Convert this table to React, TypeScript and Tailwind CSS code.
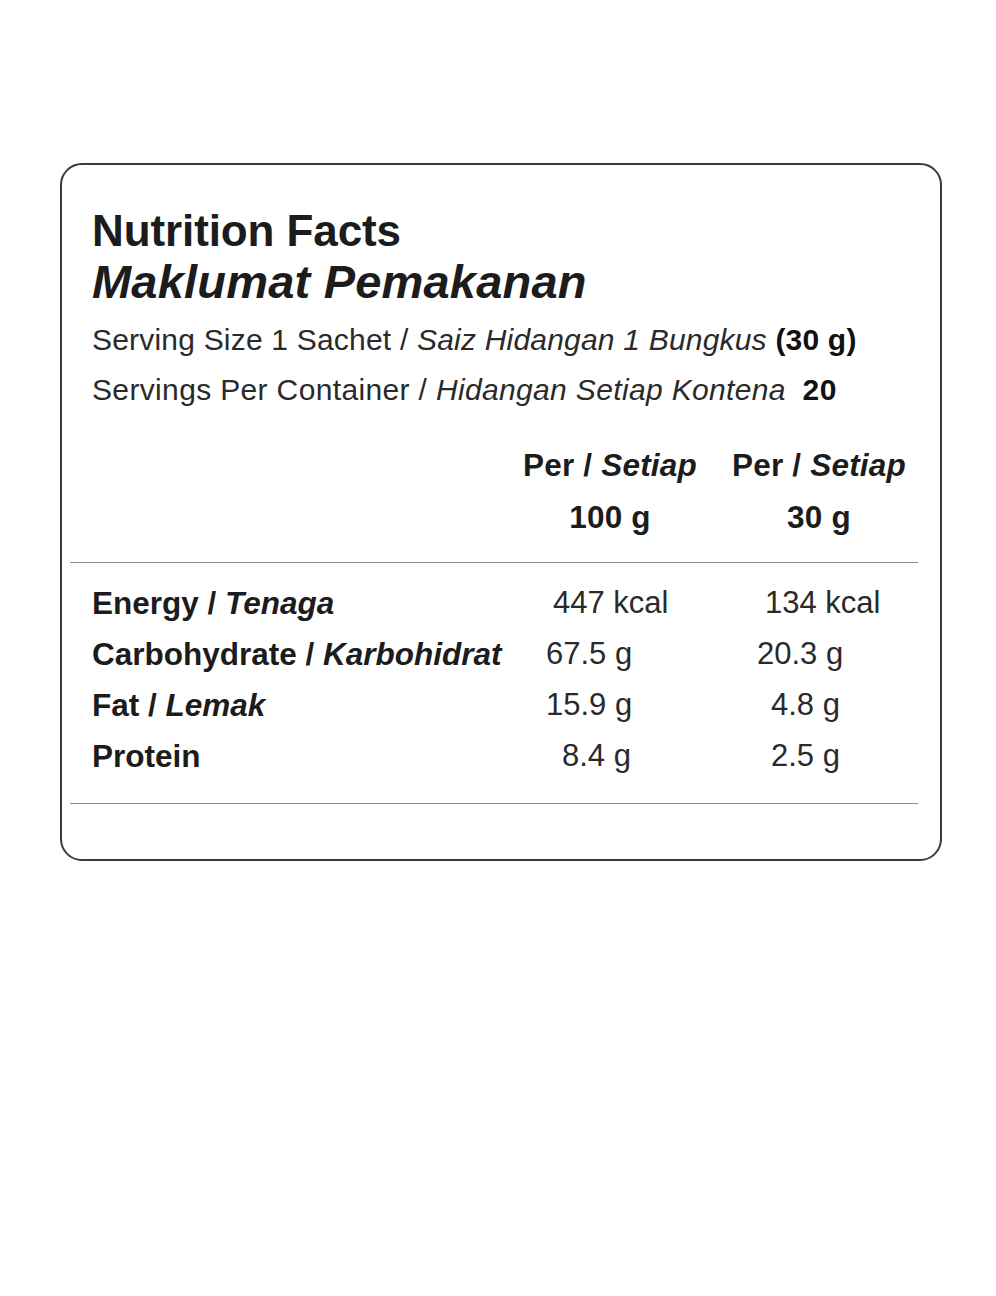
const font = { fontFamily: '"Liberation Sans", Arial, sans-serif' };

type Row = {
  en: string;
  my?: string;
  a: string;
  aPad: string;
  b: string;
  bPad: string;
};

const rows: Row[] = [
  { en: 'Energy', my: 'Tenaga', a: '447 kcal', aPad: 'pl-[33px]', b: '134 kcal', bPad: 'pl-[35px]' },
  { en: 'Carbohydrate', my: 'Karbohidrat', a: '67.5 g', aPad: 'pl-[26px]', b: '20.3 g', bPad: 'pl-[27px]' },
  { en: 'Fat', my: 'Lemak', a: '15.9 g', aPad: 'pl-[26px]', b: '4.8 g', bPad: 'pl-[41px]' },
  { en: 'Protein', a: '8.4 g', aPad: 'pl-[42px]', b: '2.5 g', bPad: 'pl-[41px]' },
];

const ColHead = ({ amount, pad }: { amount: string; pad: string }) => (
  <div className={`${pad} flex`}>
    <div className="flex flex-col items-center font-bold text-[31.5px] leading-[52px] tracking-[0.2px]">
      <span>
        Per / <span className="italic">Setiap</span>
      </span>
      <span>{amount}</span>
    </div>
  </div>
);

export default function App() {
  return (
    <div className="min-h-[1296px] bg-white text-[#1c1c1c]" style={font}>
      <div className="pt-[163px] px-[60px] w-[1002px]">
        <div className="border-2 border-[#3a3a3a] rounded-[22px] pl-[30px] pr-[22px] pt-[40px] pb-[55px] w-[882px]">
          <h1 className="font-bold text-[44px] leading-[51px] tracking-[-0.1px]">Nutrition Facts</h1>
          <h2 className="font-bold italic text-[47px] leading-[51px] tracking-[0.2px]">Maklumat Pemakanan</h2>

          <p className="text-[30px] leading-[50px] mt-[8px] text-[#2a2a2a] tracking-[0.2px] whitespace-nowrap">
            Serving Size 1 Sachet / <span className="italic">Saiz Hidangan 1 Bungkus</span>{' '}
            <span className="font-bold text-[#111]">(30 g)</span>
          </p>
          <p className="text-[30px] leading-[50px] text-[#2a2a2a] tracking-[0.35px] whitespace-nowrap">
            Servings Per Container / <span className="italic">Hidangan Setiap Kontena</span>{' '}
            <span className="font-bold text-[#111] ml-[8px]">20</span>
          </p>

          <div className="grid grid-cols-[428px_210px_188px] mt-[24px]">
            <div />
            <ColHead amount="100 g" pad="pl-[3px]" />
            <ColHead amount="30 g" pad="pl-[2px]" />
          </div>

          <div className="-ml-[22px] mt-[19px] h-px bg-[#8c8c8c]" />

          <div className="mt-[15px]">
            {rows.map((r) => (
              <div key={r.en} className="grid grid-cols-[428px_210px_188px] h-[51px] items-center">
                <div className="font-bold text-[31.5px] whitespace-nowrap">
                  {r.en}
                  {r.my && (
                    <>
                      {' / '}
                      <span className="italic">{r.my}</span>
                    </>
                  )}
                </div>
                <div className={`${r.aPad} text-[31px] text-[#2a2a2a] whitespace-nowrap`}>{r.a}</div>
                <div className={`${r.bPad} text-[31px] text-[#2a2a2a] whitespace-nowrap`}>{r.b}</div>
              </div>
            ))}
          </div>

          <div className="-ml-[22px] mt-[21px] h-px bg-[#8c8c8c]" />
        </div>
      </div>
    </div>
  );
}
